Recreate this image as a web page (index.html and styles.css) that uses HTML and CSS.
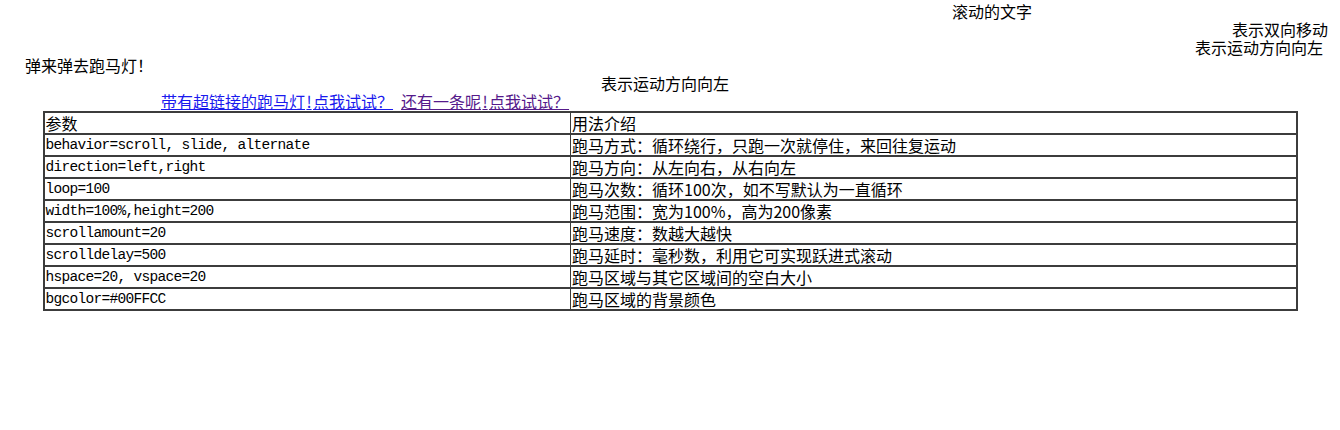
FILE: index.html
```html
<!DOCTYPE html>
<html lang="zh">
<head>
<meta charset="utf-8">
<title>跑马灯</title>
<link rel="stylesheet" href="styles.css">
</head>
<body>
<div class="line l1">滚动的文字</div>
<div class="line right l2">表示双向移动</div>
<div class="line right l3">表示运动方向向左</div>
<div class="line l4">弹来弹去跑马灯！</div>
<div class="line l5">表示运动方向向左</div>
<div class="line l6"><a class="link first" href="#a">带有超链接的跑马灯<span class="half">!</span>点我试试？</a><a class="link visited" href="#b">还有一条呢<span class="half">!</span>点我试试？</a></div>
<table class="params">
  <colgroup><col class="c1"><col class="c2"></colgroup>
  <tr><td class="zh">参数</td><td>用法介绍</td></tr>
  <tr><td class="code">behavior=scroll, slide, alternate</td><td>跑马方式：循环绕行，只跑一次就停住，来回往复运动</td></tr>
  <tr><td class="code">direction=left,right</td><td>跑马方向：从左向右，从右向左</td></tr>
  <tr><td class="code">loop=100</td><td>跑马次数：循环100次，如不写默认为一直循环</td></tr>
  <tr><td class="code">width=100%,height=200</td><td>跑马范围：宽为100%，高为200像素</td></tr>
  <tr><td class="code">scrollamount=20</td><td>跑马速度：数越大越快</td></tr>
  <tr><td class="code">scrolldelay=500</td><td>跑马延时：毫秒数，利用它可实现跃进式滚动</td></tr>
  <tr><td class="code">hspace=20, vspace=20</td><td>跑马区域与其它区域间的空白大小</td></tr>
  <tr><td class="code">bgcolor=#00FFCC</td><td>跑马区域的背景颜色</td></tr>
</table>
</body>
</html>
```
FILE: styles.css
```css
html, body {
  margin: 0;
  padding: 0;
  background: #fff;
}
body {
  font-family: "Noto Sans CJK SC", "Liberation Sans", sans-serif;
  font-size: 16px;
  color: #000;
  padding-top: 2px;
}
.line {
  height: 18px;
  line-height: 18px;
  white-space: nowrap;
}
.right { text-align: right; }
.l1 { padding-left: 952px; }
.l2 { padding-right: 12px; }
.l3 { padding-right: 17px; }
.l4 { padding-left: 25px; }
.l5 { padding-left: 601px; }
.l6 { padding-left: 161px; }
.link { color: #1a1aee; text-decoration: underline; }
.link.visited { color: #551a8b; margin-left: 8px; }
.half {
  display: inline-block;
  width: 8px;
  text-align: center;
  text-decoration: underline;
}
.params {
  width: 1255px;
  margin: 1px auto 0;
  border-collapse: collapse;
  table-layout: fixed;
  border: 2px solid #3c3c3c;
}
.params .c1 { width: 527px; }
.params td {
  border: 1px solid #3c3c3c;
  border-width: 2px 1px 0 1px;
  padding: 1px 1px 0 1px;
  line-height: 19px;
  height: 19px;
  white-space: nowrap;
  vertical-align: middle;
}
.params td.code {
  font-family: "Liberation Mono", "Noto Sans CJK SC", monospace;
  font-size: 14.5px;
  letter-spacing: -0.7px;
}
```
